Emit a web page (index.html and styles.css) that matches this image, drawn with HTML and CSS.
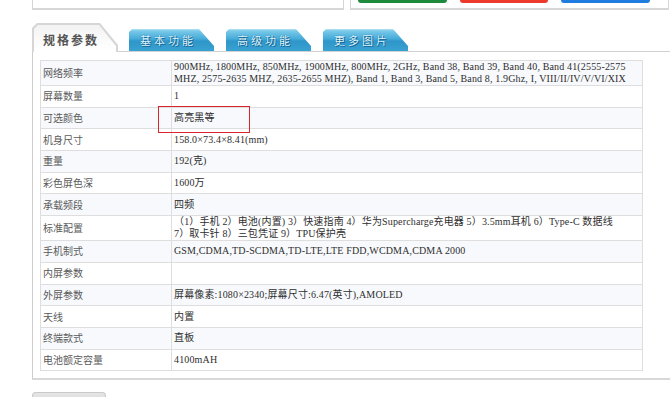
FILE: index.html
```html
<!DOCTYPE html>
<html lang="zh-CN">
<head>
<meta charset="utf-8">
<title>规格参数</title>
<link rel="stylesheet" href="styles.css">
</head>
<body>
<div class="top">
  <div class="box box-left"></div>
  <div class="box box-right">
    <span class="btn btn-green"></span>
    <span class="btn btn-red"></span>
    <span class="btn btn-blue"></span>
  </div>
</div>
<div class="tabs">
  <div class="tab-active"><div class="tab-active-inner">规格参数</div></div>
  <div class="tab-blue tab-first">基本功能</div>
  <div class="tab-blue">高级功能</div>
  <div class="tab-blue">更多图片</div>
</div>
<div class="panel">
  <table class="spec">
    <colgroup><col class="col-label"><col></colgroup>
    <tr class="odd tall"><td class="label">网络频率</td><td class="val">900MHz, 1800MHz, 850MHz, 1900MHz, 800MHz, 2GHz, Band 38, Band 39, Band 40, Band 41(2555-2575<br>MHZ, 2575-2635 MHZ, 2635-2655 MHZ), Band 1, Band 3, Band 5, Band 8, 1.9Ghz, I, VIII/II/IV/V/VI/XIX</td></tr>
    <tr><td class="label">屏幕数量</td><td class="val">1</td></tr>
    <tr class="odd"><td class="label">可选颜色</td><td class="val mark-cell">高亮黑等<span class="mark"></span></td></tr>
    <tr><td class="label">机身尺寸</td><td class="val">158.0×73.4×8.41(mm)</td></tr>
    <tr class="odd"><td class="label">重量</td><td class="val">192(克)</td></tr>
    <tr><td class="label">彩色屏色深</td><td class="val">1600万</td></tr>
    <tr class="odd"><td class="label">承载频段</td><td class="val">四频</td></tr>
    <tr class="tall"><td class="label">标准配置</td><td class="val">（1）手机 2）电池(内置) 3）快速指南 4）华为Supercharge充电器 5）3.5mm耳机 6）Type-C 数据线<br>7）取卡针 8）三包凭证 9）TPU保护壳</td></tr>
    <tr class="odd"><td class="label">手机制式</td><td class="val">GSM,CDMA,TD-SCDMA,TD-LTE,LTE FDD,WCDMA,CDMA 2000</td></tr>
    <tr><td class="label">内屏参数</td><td class="val"></td></tr>
    <tr class="odd"><td class="label">外屏参数</td><td class="val">屏幕像素:1080×2340;屏幕尺寸:6.47(英寸),AMOLED</td></tr>
    <tr><td class="label">天线</td><td class="val">内置</td></tr>
    <tr class="odd"><td class="label">终端款式</td><td class="val">直板</td></tr>
    <tr><td class="label">电池额定容量</td><td class="val">4100mAH</td></tr>
  </table>
</div>
<div class="next-tab"></div>
</body>
</html>
```
FILE: styles.css
```css
html, body {
  margin: 0;
  padding: 0;
  background: #fff;
  overflow: hidden;
}
body {
  width: 670px;
  height: 397px;
  font-family: "Liberation Serif", "Noto Sans CJK SC", serif;
}

/* top boxes */
.top {
  display: flex;
  gap: 6px;
  padding-left: 32px;
  height: 10px;
}
.box {
  box-sizing: border-box;
  height: 10px;
  border: 1px solid #d6d6d6;
  border-top: 0;
  border-bottom-width: 2px;
  background: #fff;
}
.box-left { width: 312px; }
.box-right {
  width: 319px;
  display: flex;
  align-items: flex-start;
  gap: 13px;
  padding-left: 7px;
}
.btn {
  display: block;
  height: 3px;
  border-radius: 0 0 4px 4px;
}
.btn-green { width: 89px; background: #1e8a3c; }
.btn-red { width: 88px; background: #ee3a2c; }
.btn-blue { width: 89px; background: #1f7ddf; }

/* tabs */
.tabs {
  display: flex;
  align-items: flex-end;
  height: 28px;
  margin-top: 13px;
  padding-left: 32px;
}
.tab-active {
  position: relative;
  z-index: 1;
  width: 86px;
  height: 29px;
  margin-bottom: -1px;
  box-sizing: border-box;
  padding: 2px 2px 0 2px;
  background: #d6d6d6;
  clip-path: polygon(0 5px, 5px 0, 68px 0, 86px 22px, 86px 100%, 0 100%);
}
.tab-active-inner {
  height: 100%;
  box-sizing: border-box;
  padding: 6px 0 0 9px;
  background: linear-gradient(#f3f3f3, #fbfbfb 60%, #fff);
  clip-path: polygon(0 4px, 4px 0, 65px 0, 82px 21px, 82px 100%, 0 100%);
  font-family: "Noto Sans CJK SC", sans-serif;
  font-size: 12px;
  font-weight: bold;
  letter-spacing: 2px;
  line-height: 18px;
  color: #555;
}
.tab-blue {
  width: 85px;
  height: 22px;
  box-sizing: border-box;
  margin-left: 12px;
  padding-left: 11px;
  background:
    linear-gradient(to bottom, #b3e3f4 0, #78c8e8 2px, #45abd8 45%, #2e96c8 55%, #3aa2d2 100%);
  clip-path: polygon(0 3px, 3px 0, 70px 0, 85px 17px, 85px 100%, 0 100%);
  font-family: "Noto Sans CJK SC", sans-serif;
  font-size: 11px;
  letter-spacing: 3px;
  line-height: 22px;
  color: #dff5fd;
  text-shadow: 0 0 1px #0b5a88, 1px 1px 0 #17699a;
}
.tab-first { margin-left: 11px; }

/* panel */
.panel {
  width: 660px;
  margin-left: 32px;
  box-sizing: border-box;
  border-left: 1px solid #cdcdcd;
  border-top: 1px solid #d2d2d2;
  border-bottom: 2px solid #d8d8d8;
  padding: 8px 0 7px 7px;
}
.spec {
  width: 603px;
  border-collapse: collapse;
  border: 1px solid #dadada;
  font-size: 10px;
  line-height: 12px;
}
.col-label { width: 131px; }
.spec tr { height: 21.7px; }
.spec tr.tall { height: 25px; }
.spec tr.odd { background: #f7f9fc; }
.spec td {
  border: 1px solid #dedede;
  padding: 0 2px;
  vertical-align: middle;
}
.label {
  font-family: "Noto Sans CJK SC", sans-serif;
  color: #5a5a5a;
}
.val {
  color: #2e2e2e;
  letter-spacing: 0.15px;
}
.mark-cell { position: relative; }
.mark {
  position: absolute;
  left: -14px;
  top: -2px;
  width: 92px;
  height: 27px;
  box-sizing: border-box;
  border: 1.5px solid #d9262e;
}

/* next section tab */
.next-tab {
  width: 74px;
  height: 12px;
  margin: 12px 0 0 32px;
  box-sizing: border-box;
  border: 1px solid #c9c9c9;
  border-bottom: 0;
  border-radius: 4px 4px 0 0;
  background: linear-gradient(#e6e6e6, #d3d3d3);
}
```
